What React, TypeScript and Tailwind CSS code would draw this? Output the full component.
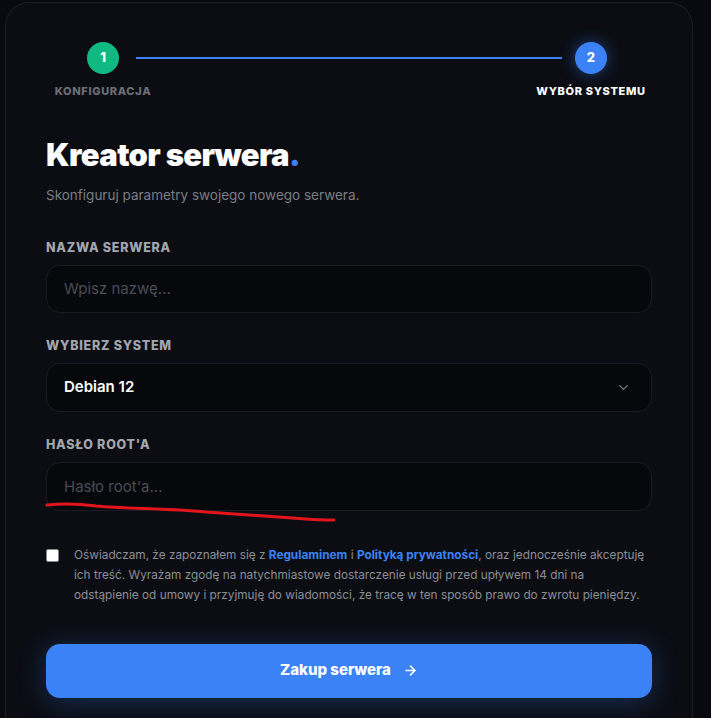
import { ChevronDown, ArrowRight } from "lucide-react";

const font = { fontFamily: "Inter, 'Noto Sans', sans-serif" };

function Step({ n, label, active }: { n: number; label: string; active?: boolean }) {
  return (
    <div className="flex w-[110px] flex-col items-center gap-[9px]">
      <div
        className={
          active
            ? "flex h-8 w-8 items-center justify-center rounded-full bg-[#3b82f6] text-[13px] font-extrabold text-white shadow-[0_0_16px_rgba(59,130,246,0.45)]"
            : "flex h-8 w-8 items-center justify-center rounded-full bg-[#10b981] text-[13px] font-extrabold text-white"
        }
      >
        {n}
      </div>
      <span
        className={
          active
            ? "whitespace-nowrap text-[11px] font-extrabold uppercase tracking-[0.06em] text-white"
            : "whitespace-nowrap text-[11px] font-extrabold uppercase tracking-[0.06em] text-[#6b6e76]"
        }
      >
        {label}
      </span>
    </div>
  );
}

function Field({ label, children }: { label: string; children: React.ReactNode }) {
  return (
    <div className="flex flex-col gap-[9px]">
      <label className="text-[12.5px] font-extrabold uppercase leading-4 tracking-[0.06em] text-[#a3a6ae]">
        {label}
      </label>
      {children}
    </div>
  );
}

export default function App() {
  return (
    <div className="min-h-screen bg-[#080a10] pl-[5px] pr-[18px] pt-[2px]" style={font}>
      <div className="relative rounded-t-[24px] border border-b-0 border-[#1b1e26] bg-[#0b0d13] px-10 pb-6 pt-[39px]">
        <div className="flex items-start justify-between pl-[2px] pr-[6px]">
          <Step n={1} label="Konfiguracja" />
          <div className="ml-[-22px] mr-[-26px] mt-[15px] h-[2px] flex-1 bg-[#3b82f6]" />
          <Step n={2} label="Wybór systemu" active />
        </div>

        <h1 className="mt-[35px] text-[31px] font-black leading-[40px] tracking-[-0.02em] text-white">
          Kreator serwera<span className="text-[#3b82f6]">.</span>
        </h1>
        <p className="mt-[10px] text-[13.5px] leading-5 text-[#7a7d86]">
          Skonfiguruj parametry swojego nowego serwera.
        </p>

        <div className="mt-[35px] flex flex-col gap-[25px]">
          <Field label="Nazwa serwera">
            <input
              placeholder="Wpisz nazwę..."
              className="h-12 w-full rounded-[14px] border border-[#1a1c23] bg-[#07080c] px-[17px] text-[15px] text-white outline-none placeholder:text-[#4a4d55]"
            />
          </Field>
          <Field label="Wybierz system">
            <div className="flex h-[49px] w-full items-center justify-between rounded-[14px] border border-[#1a1c23] bg-[#07080c] pl-[17px] pr-[20px]">
              <span className="text-[15px] font-semibold text-white">Debian 12</span>
              <ChevronDown size={15} strokeWidth={2} className="text-[#7d8089]" />
            </div>
          </Field>
          <Field label="Hasło root'a">
            <input
              placeholder="Hasło root'a..."
              className="h-[49px] w-full rounded-[14px] border border-[#1a1c23] bg-[#07080c] px-[17px] text-[15px] text-white outline-none placeholder:text-[#4a4d55]"
            />
          </Field>
        </div>

        <div className="mt-[34px] flex items-start gap-[15px]">
          <div className="mt-[4px] h-[13px] w-[13px] shrink-0 rounded-[2px] border border-[#888] bg-white" />
          <p className="min-w-0 flex-1 whitespace-nowrap text-[11.8px] leading-[20px] text-[#8b8e96]">
            Oświadczam, że zapoznałem się z{" "}
            <span className="font-bold text-[#3b82f6]">Regulaminem</span> i{" "}
            <span className="font-bold text-[#3b82f6]">Polityką prywatności</span>, oraz jednocześnie
            akceptuję
            <br />
            ich treść. Wyrażam zgodę na natychmiastowe dostarczenie usługi przed upływem 14 dni na
            <br />
            odstąpienie od umowy i przyjmuję do wiadomości, że tracę w ten sposób prawo do zwrotu
            pieniędzy.
          </p>
        </div>

        <button className="mt-[39px] flex h-[54px] w-full items-center justify-center gap-3 rounded-[14px] bg-[#3b82f6] text-[15px] font-extrabold text-white shadow-[0_4px_28px_rgba(59,130,246,0.3)]">
          Zakup serwera
          <ArrowRight size={15} strokeWidth={2.5} />
        </button>

        <svg
          className="pointer-events-none absolute left-0 top-0"
          width="400"
          height="560"
          viewBox="0 0 400 560"
        >
          <path
            d="M41 502 C60 500 75 501 90 503 C120 506 160 505 200 509 C240 512 275 514 300 516 C312 517 320 517 328 517"
            fill="none"
            stroke="#e3141b"
            strokeWidth="3"
            strokeLinecap="round"
          />
        </svg>
      </div>
    </div>
  );
}
